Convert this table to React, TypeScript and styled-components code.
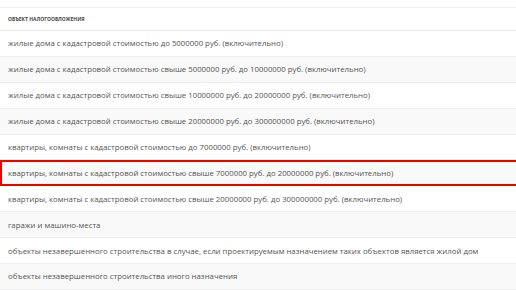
import React from "react";
import styled, { createGlobalStyle } from "styled-components";

const Global = createGlobalStyle`
  html, body { margin: 0; padding: 0; background: #fff; }
  body { font-family: "Open Sans", "Noto Sans", sans-serif; color: #555; }
`;

const Table = styled.div`
  margin-top: 7px;
  border-top: 1px solid #eee;
`;

const HeaderRow = styled.div`
  height: 22px;
  display: flex;
  align-items: center;
  padding-left: 8px;
  border-bottom: 1px solid #e6e6e6;
  font-size: 5px;
  font-weight: 700;
  text-transform: uppercase;
  color: #444;
`;

const Row = styled.div<{ $alt: boolean; $active: boolean }>`
  box-sizing: border-box;
  height: 25.9px;
  display: flex;
  align-items: center;
  padding-left: ${(p) => (p.$active ? "6px" : "8px")};
  font-size: 7.8px;
  color: #555;
  white-space: nowrap;
  background: ${(p) => (p.$alt ? "#f9f9f9" : "#fff")};
  border-bottom: 1px solid #eee;
  ${(p) =>
    p.$active
      ? "border: 2px solid #e00; border-right: none; background: #f9f9f9;"
      : ""}
`;

const rows = [
  "жилые дома с кадастровой стоимостью до 5000000 руб. (включительно)",
  "жилые дома с кадастровой стоимостью свыше 5000000 руб. до 10000000 руб. (включительно)",
  "жилые дома с кадастровой стоимостью свыше 10000000 руб. до 20000000 руб. (включительно)",
  "жилые дома с кадастровой стоимостью свыше 20000000 руб. до 300000000 руб. (включительно)",
  "квартиры, комнаты с кадастровой стоимостью до 7000000 руб. (включительно)",
  "квартиры, комнаты с кадастровой стоимостью свыше 7000000 руб. до 20000000 руб. (включительно)",
  "квартиры, комнаты с кадастровой стоимостью свыше 20000000 руб. до 300000000 руб. (включительно)",
  "гаражи и машино-места",
  "объекты незавершенного строительства в случае, если проектируемым назначением таких объектов является жилой дом",
  "объекты незавершенного строительства иного назначения",
];

export default function App() {
  return (
    <>
      <Global />
      <Table>
        <HeaderRow>Объект налогообложения</HeaderRow>
        {rows.map((r, i) => (
          <Row key={i} $alt={i % 2 === 1} $active={i === 5}>
            {r}
          </Row>
        ))}
      </Table>
    </>
  );
}
